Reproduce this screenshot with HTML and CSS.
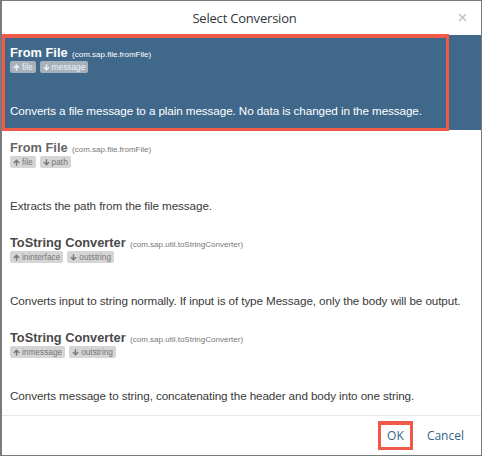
FILE: index.html
```html
<!DOCTYPE html>
<html>
<head>
<meta charset="utf-8">
<link rel="stylesheet" href="styles.css">
</head>
<body>
<div class="dialog">
  <header class="dlg-header">
    <span class="dlg-title">Select Conversion</span>
    <svg class="close" width="9" height="9" viewBox="0 0 9 9"><path d="M1 1 L8 8 M8 1 L1 8" stroke="#c4c4c4" stroke-width="1.6" fill="none"/></svg>
  </header>
  <div class="list">
    <div class="item selected">
      <div class="item-title"><b>From File</b> <span class="ns">(com.sap.file.fromFile)</span></div>
      <div class="badges">
        <span class="badge"><svg class="ic" viewBox="0 0 8 8"><path d="M4 0.3 L7.6 3.9 L6.4 5 L4.8 3.4 L4.8 7.8 L3.2 7.8 L3.2 3.4 L1.6 5 L0.4 3.9 Z"/></svg>file</span>
        <span class="badge"><svg class="ic" viewBox="0 0 8 8"><path d="M4 7.7 L7.6 4.1 L6.4 3 L4.8 4.6 L4.8 0.2 L3.2 0.2 L3.2 4.6 L1.6 3 L0.4 4.1 Z"/></svg>message</span>
      </div>
      <div class="desc">Converts a file message to a plain message. No data is changed in the message.</div>
      <div class="mark"></div>
    </div>
    <div class="item">
      <div class="item-title"><b class="light">From File</b> <span class="ns">(com.sap.file.fromFile)</span></div>
      <div class="badges">
        <span class="badge"><svg class="ic" viewBox="0 0 8 8"><path d="M4 0.3 L7.6 3.9 L6.4 5 L4.8 3.4 L4.8 7.8 L3.2 7.8 L3.2 3.4 L1.6 5 L0.4 3.9 Z"/></svg>file</span>
        <span class="badge"><svg class="ic" viewBox="0 0 8 8"><path d="M4 7.7 L7.6 4.1 L6.4 3 L4.8 4.6 L4.8 0.2 L3.2 0.2 L3.2 4.6 L1.6 3 L0.4 4.1 Z"/></svg>path</span>
      </div>
      <div class="desc">Extracts the path from the file message.</div>
    </div>
    <div class="item">
      <div class="item-title"><b>ToString Converter</b> <span class="ns">(com.sap.util.toStringConverter)</span></div>
      <div class="badges">
        <span class="badge"><svg class="ic" viewBox="0 0 8 8"><path d="M4 0.3 L7.6 3.9 L6.4 5 L4.8 3.4 L4.8 7.8 L3.2 7.8 L3.2 3.4 L1.6 5 L0.4 3.9 Z"/></svg>ininterface</span>
        <span class="badge"><svg class="ic" viewBox="0 0 8 8"><path d="M4 7.7 L7.6 4.1 L6.4 3 L4.8 4.6 L4.8 0.2 L3.2 0.2 L3.2 4.6 L1.6 3 L0.4 4.1 Z"/></svg>outstring</span>
      </div>
      <div class="desc">Converts input to string normally. If input is of type Message, only the body will be output.</div>
    </div>
    <div class="item">
      <div class="item-title"><b>ToString Converter</b> <span class="ns">(com.sap.util.toStringConverter)</span></div>
      <div class="badges">
        <span class="badge"><svg class="ic" viewBox="0 0 8 8"><path d="M4 0.3 L7.6 3.9 L6.4 5 L4.8 3.4 L4.8 7.8 L3.2 7.8 L3.2 3.4 L1.6 5 L0.4 3.9 Z"/></svg>inmessage</span>
        <span class="badge"><svg class="ic" viewBox="0 0 8 8"><path d="M4 7.7 L7.6 4.1 L6.4 3 L4.8 4.6 L4.8 0.2 L3.2 0.2 L3.2 4.6 L1.6 3 L0.4 4.1 Z"/></svg>outstring</span>
      </div>
      <div class="desc">Converts message to string, concatenating the header and body into one string.</div>
    </div>
  </div>
  <footer class="dlg-footer">
    <button class="btn ok">OK</button>
    <button class="btn">Cancel</button>
  </footer>
</div>
</body>
</html>
```

FILE: styles.css
```css
html, body {
  margin: 0;
  padding: 0;
}
body {
  background: #7a7a7a;
  width: 482px;
  height: 456px;
  overflow: hidden;
}
.dialog {
  margin: 1px 0 0 2px;
  width: 479px;
  height: 454px;
  background: #fff;
  display: flex;
  flex-direction: column;
}
.dlg-header {
  height: 34px;
  flex: none;
  position: relative;
  display: flex;
  align-items: center;
  justify-content: center;
}
.dlg-title {
  font-family: "Open Sans", sans-serif;
  font-size: 13px;
  color: #32363a;
  letter-spacing: -0.2px;
  margin-left: 6px;
}
.close {
  position: absolute;
  right: 14px;
  top: 12px;
}
.list {
  flex: 1;
  display: flex;
  flex-direction: column;
}
.item {
  height: 95px;
  box-sizing: border-box;
  padding: 8px 8px 0 8px;
  position: relative;
  font-family: "Liberation Sans", Arial, sans-serif;
  color: #333;
}
.item-title {
  line-height: 17px;
  height: 17px;
}
.item-title b {
  font-size: 12.8px;
  font-weight: bold;
  color: #4a4a4a;
}
.item-title b.light {
  color: #666;
}
.ns {
  font-size: 8px;
  color: #777;
}
.badges {
  display: flex;
  gap: 4px;
  margin-top: 1px;
}
.badge {
  display: inline-flex;
  align-items: center;
  gap: 2px;
  height: 12px;
  padding: 0 3px;
  border-radius: 2px;
  background: #d5d5d5;
  color: #777;
  font-size: 8.3px;
  line-height: 12px;
}
.ic {
  width: 7px;
  height: 7px;
  fill: currentColor;
}
.desc {
  margin-top: 30px;
  font-size: 11.7px;
  line-height: 15px;
  letter-spacing: -0.1px;
  color: #3a3a3a;
}
.selected {
  background: #3f688b;
  color: #fff;
}
.selected .item-title b,
.selected .ns,
.selected .desc {
  color: #fff;
}
.selected .badge {
  background: rgba(205, 205, 205, 0.72);
  color: #f2f2f2;
}
.mark {
  position: absolute;
  left: 0;
  top: -1px;
  width: 447px;
  height: 97px;
  box-sizing: border-box;
  border: 3px solid #f05a4b;
  border-top-width: 4px;
}
.dlg-footer {
  height: 39px;
  flex: none;
  border-top: 1px solid #e8e8e8;
  display: flex;
  align-items: center;
  justify-content: flex-end;
  gap: 14px;
  padding-right: 17px;
}
.btn {
  font-family: "Open Sans", sans-serif;
  font-size: 12px;
  color: #346187;
  background: none;
  border: none;
  padding: 0;
  height: 29px;
  line-height: 22px;
}
.btn.ok {
  width: 35px;
  border: 3px solid #f05a4b;
  border-top-width: 4px;
  box-sizing: border-box;
}
```
